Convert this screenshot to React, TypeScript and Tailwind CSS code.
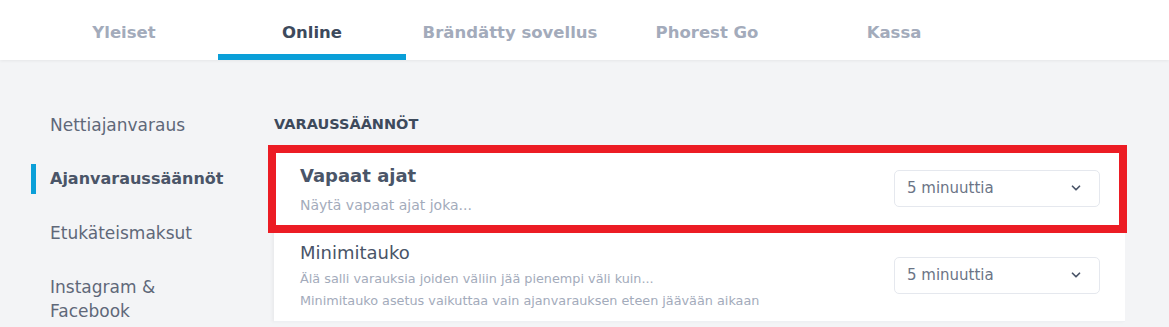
import { ChevronDown } from "lucide-react";

const tabs = [
    { label: "Yleiset", width: "w-[188px]" },
    { label: "Online", width: "w-[188px]", active: true },
    { label: "Brändätty sovellus", width: "w-[208px]" },
    { label: "Phorest Go", width: "w-[186px]" },
    { label: "Kassa", width: "w-[188px]" },
];

const menu = [
    { label: "Nettiajanvaraus" },
    { label: "Ajanvaraussäännöt", active: true },
    { label: "Etukäteismaksut" },
    { label: "Instagram & Facebook" },
];

const Select = ({ value }: { value: string }) => (
    <div className="flex items-center justify-between w-[206px] h-[37px] pl-3 pr-4 bg-white border border-[#e5e8ee] rounded-[5px]">
        <span className="text-[15px] text-[#6b7486]">{value}</span>
        <ChevronDown size={14} strokeWidth={3} className="text-[#4a5568]" />
    </div>
);

const App = () => {
    return (
        <div className="w-[1169px] h-[327px] overflow-hidden bg-[#f3f4f6] font-['DejaVu_Sans',sans-serif]">
            <div className="h-[60px] bg-white flex pl-[30px] shadow-[0_1px_3px_rgba(0,0,0,0.06)] relative z-10">
                {tabs.map((t) => (
                    <div key={t.label}
                         className={`${t.width} flex items-center justify-center border-b-[6px] ${t.active ? "border-[#0a9fd8] text-[#3d4a5c]" : "border-transparent text-[#a3abbb]"}`}>
                        <span className="text-[16.5px] font-bold pt-[12px]">{t.label}</span>
                    </div>
                ))}
            </div>

            <div className="flex pt-[52px]">
                <div className="w-[274px] shrink-0 flex flex-col gap-[24px] -mt-[2px]">
                    {menu.map((m) => (
                        <div key={m.label} className="flex items-stretch">
                            <div className={`w-[5px] ml-[31px] mr-[14px] ${m.active ? "bg-[#0a9fd8]" : ""}`} />
                            <span className={`leading-[24px] py-[3px] w-[170px] ${m.active ? "text-[16px] font-bold text-[#4a5568]" : "text-[17px] text-[#5f6879]"}`}>
                                {m.label}
                            </span>
                        </div>
                    ))}
                </div>

                <div className="w-[851px]">
                    <div className="text-[14.5px] font-bold text-[#3d4a5c] h-[36px] flex items-center pb-[10px]">VARAUSSÄÄNNÖT</div>
                    <div className="relative bg-white shadow-[-2px_0_3px_rgba(0,0,0,0.04)]">
                        <div className="flex items-center justify-between h-[81px] pl-[26px] pr-[25px] border-b border-[#eef0f3]">
                            <div className="flex flex-col gap-[6px] pt-[2px]">
                                <span className="text-[18px] font-semibold text-[#4a5568]">Vapaat ajat</span>
                                <span className="text-[14px] text-[#a3abbb]">Näytä vapaat ajat joka...</span>
                            </div>
                            <Select value="5 minuuttia" />
                        </div>
                        <div className="flex items-center justify-between h-[93px] pl-[26px] pr-[25px] border-b border-[#eef0f3]">
                            <div className="flex flex-col">
                                <span className="text-[18px] text-[#4a5568] mb-[2px]">Minimitauko</span>
                                <span className="text-[12.8px] leading-[22px] text-[#a3abbb]">Älä salli varauksia joiden väliin jää pienempi väli kuin...</span>
                                <span className="text-[12.8px] leading-[22px] text-[#a3abbb]">Minimitauko asetus vaikuttaa vain ajanvarauksen eteen jäävään aikaan</span>
                            </div>
                            <Select value="5 minuuttia" />
                        </div>
                        <div className="absolute left-[-6px] top-[-3px] w-[859px] h-[88px] border-[8px] border-[#ec1c24]" />
                    </div>
                </div>
            </div>
        </div>
    );
};

export default App;
